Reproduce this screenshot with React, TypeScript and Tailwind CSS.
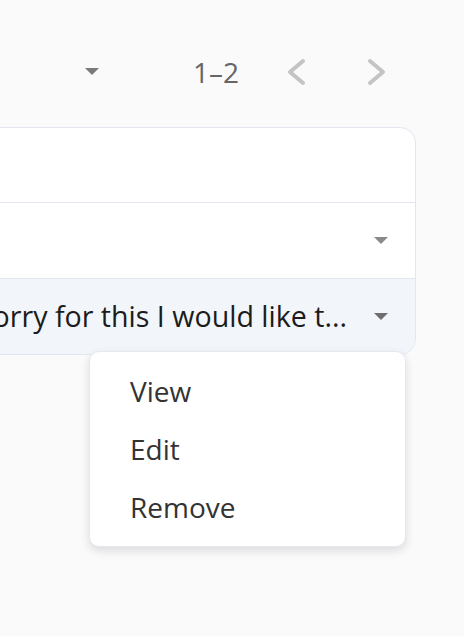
import React from 'react';

const Caret = ({ className = '' }: { className?: string }) => (
    <svg width="14" height="8" viewBox="0 0 14 8" className={className}>
        <path d="M0 0 L14 0 L7 7 Z" fill="currentColor" />
    </svg>
);

export default function App() {
    const menuItems = ['View', 'Edit', 'Remove'];

    return (
        <div
            className="w-[464px] h-[636px] bg-[#fafafa] overflow-hidden relative"
            style={{ fontFamily: '"Open Sans", "Noto Sans", sans-serif' }}
        >
            {/* Pagination */}
            <div className="h-[127px] flex items-start pt-[55px]">
                <div className="ml-[85px] w-[16px] h-[34px] flex items-center text-[#7a7a7a]">
                    <Caret />
                </div>
                <div className="ml-[92px] w-[93px] h-[34px] flex items-center text-[28px] text-[#666666]">1–2</div>
                <div className="h-[34px] w-[80px] flex items-center text-[#c4c4c4]">
                    <svg width="21" height="28" viewBox="0 0 21 28">
                        <path d="M17 3 L4 14 L17 25" fill="none" stroke="currentColor" strokeWidth="4" strokeLinecap="round" strokeLinejoin="round" />
                    </svg>
                </div>
                <div className="h-[34px] flex items-center text-[#c4c4c4]">
                    <svg width="21" height="28" viewBox="0 0 21 28">
                        <path d="M4 3 L17 14 L4 25" fill="none" stroke="currentColor" strokeWidth="4" strokeLinecap="round" strokeLinejoin="round" />
                    </svg>
                </div>
            </div>

            {/* Table card, scrolled so its left side is out of view */}
            <div className="ml-[-400px] w-[816px] bg-white border border-[#e3e5f0] rounded-[16px] overflow-hidden">
                <div className="h-[75px] border-b border-[#e3e5f0]" />
                <div className="h-[76px] border-b border-[#e3e5f0] flex items-center justify-end pr-[27px] text-[#8a8a8a]">
                    <Caret />
                </div>
                <div className="h-[75px] bg-[#f2f6fb] flex items-center justify-end pr-[27px]">
                    <span className="text-[28.6px] text-[#1c1c1c] whitespace-nowrap mr-[27px]">
                        I'm so sorry for this I would like t...
                    </span>
                    <span className="text-[#6e6e6e]">
                        <Caret />
                    </span>
                </div>
            </div>

            {/* Row action menu */}
            <div className="absolute left-[89px] top-[351px] w-[317px] bg-white border border-[#e6e8f0] rounded-[10px] shadow-[0_4px_10px_rgba(0,0,0,0.12)] pt-[10px] pb-[10px]">
                {menuItems.map((item) => (
                    <div key={item} className="h-[58px] flex items-center pl-[40px] text-[28px] text-[#333333]">
                        {item}
                    </div>
                ))}
            </div>
        </div>
    );
}
